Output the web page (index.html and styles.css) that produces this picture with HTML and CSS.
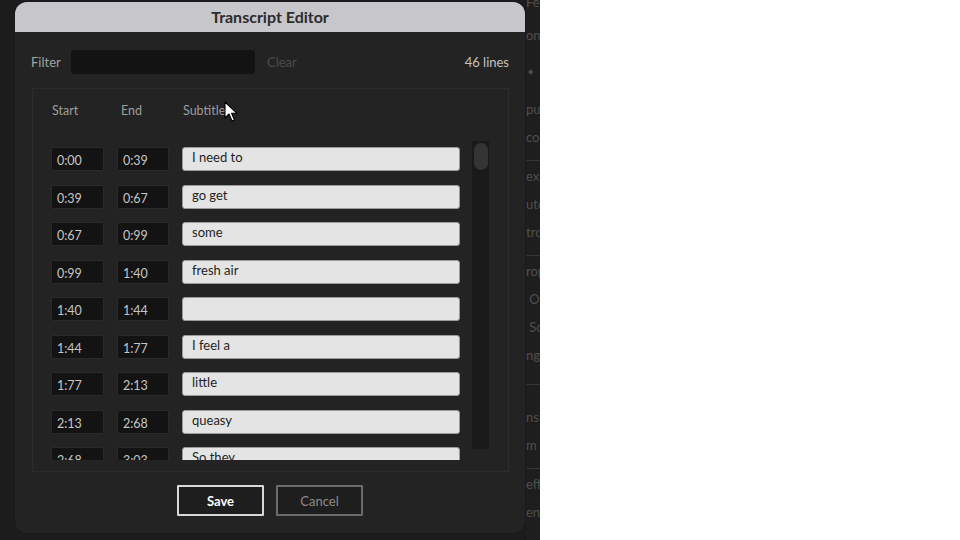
FILE: index.html
```html
<!DOCTYPE html>
<html lang="en">
<head>
    <meta charset="UTF-8">
    <title>Transcript Editor</title>
    <link rel="stylesheet" href="styles.css">
</head>
<body>
    <div class="app">
        <div class="workspace"></div>
        <aside class="side-panel">
            <div class="side-item first">Fe</div>
            <div class="side-item push-s">ons</div>
            <div class="side-item spark push-m">✦</div>
            <div class="side-item push-m">pu</div>
            <div class="side-item">con</div>
            <div class="side-sep"></div>
            <div class="side-item">ext</div>
            <div class="side-item">uto</div>
            <div class="side-item">tro</div>
            <div class="side-sep"></div>
            <div class="side-item">rop</div>
            <div class="side-item">&nbsp;O</div>
            <div class="side-item">&nbsp;Sc</div>
            <div class="side-item">ngt</div>
            <div class="side-sep wide"></div>
            <div class="side-item">nsit</div>
            <div class="side-item">m</div>
            <div class="side-sep"></div>
            <div class="side-item">effe</div>
            <div class="side-item">ent</div>
        </aside>

        <!-- modal dialog -->
        <div class="dialog">
            <div class="dialog-title">Transcript Editor</div>
            <div class="dialog-body">
                <div class="filter-row">
                    <label class="filter-label">Filter</label>
                    <div class="filter-input"></div>
                    <span class="filter-clear">Clear</span>
                    <span class="line-count">46 lines</span>
                </div>

                <div class="list-box">
                    <div class="list-head">
                        <span>Start</span>
                        <span>End</span>
                        <span>Subtitle</span>
                    </div>
                    <div class="list-scroll">
                        <div class="rows">
                            <div class="row"><div class="time">0:00</div><div class="time">0:39</div><div class="subtitle">I need to</div></div>
                            <div class="row"><div class="time">0:39</div><div class="time">0:67</div><div class="subtitle">go get</div></div>
                            <div class="row"><div class="time">0:67</div><div class="time">0:99</div><div class="subtitle">some</div></div>
                            <div class="row"><div class="time">0:99</div><div class="time">1:40</div><div class="subtitle">fresh air</div></div>
                            <div class="row"><div class="time">1:40</div><div class="time">1:44</div><div class="subtitle"></div></div>
                            <div class="row"><div class="time">1:44</div><div class="time">1:77</div><div class="subtitle">I feel a</div></div>
                            <div class="row"><div class="time">1:77</div><div class="time">2:13</div><div class="subtitle">little</div></div>
                            <div class="row"><div class="time">2:13</div><div class="time">2:68</div><div class="subtitle">queasy</div></div>
                            <div class="row"><div class="time">2:68</div><div class="time">3:03</div><div class="subtitle">So they</div></div>
                        </div>
                        <div class="scrollbar"><div class="thumb"></div></div>
                    </div>
                </div>

                <div class="buttons">
                    <button class="btn btn-save">Save</button>
                    <button class="btn btn-cancel">Cancel</button>
                </div>
            </div>
        </div>

        <svg class="cursor" width="14" height="22" viewBox="0 0 14 22">
            <path d="M1 1 L1 17 L5 13 L8 20 L10.5 19 L7.6 12.3 L13 12.3 Z" fill="#fff" stroke="#000" stroke-width="1.1" stroke-linejoin="round"/>
        </svg>
    </div>
</body>
</html>
```

FILE: styles.css
```css
body {
    margin: 0;
    background-color: #fff;
    font-family: Lato, "Noto Sans", sans-serif;
}
.app {
    position: relative;
    width: 540px;
    height: 540px;
    overflow: hidden;
    display: flex;
    background-color: #1c1c1c;
}
.workspace {
    flex: 1;
}

/* strip of the app's right panel, mostly hidden by the dialog */
.side-panel {
    width: 14px;
    background-color: #1e1e1e;
    border-left: 1px solid #191919;
    overflow: hidden;
    white-space: nowrap;
    font-size: 13px;
    color: #4f4f4f;
}
.side-item {
    height: 28px;
    line-height: 28px;
}
.side-item.first {
    margin-top: -12px;
}
.side-item.push-s {
    margin-top: 5px;
}
.side-item.push-m {
    margin-top: 9px;
}
.side-item.spark {
    font-size: 11px;
}
.side-sep {
    height: 1px;
    margin: 9px 0 1px;
    background-color: #353535;
}
.side-sep.wide {
    margin: 15px 0 18px;
}

/* dialog */
.dialog {
    position: absolute;
    left: 15px;
    top: 2px;
    width: 510px;
    height: 531px;
    display: flex;
    flex-direction: column;
    background-color: #232323;
    border-radius: 12px;
    overflow: hidden;
    box-shadow: 0 0 0 1px #1a1a1a;
}
.dialog-title {
    height: 30px;
    line-height: 29px;
    text-align: center;
    background-color: #c7c6cb;
    color: #2c2c2c;
    font-weight: bold;
    font-size: 16px;
}
.dialog-body {
    flex: 1;
    display: flex;
    flex-direction: column;
    padding: 18px 16px 0 16px;
}
.filter-row {
    display: flex;
    align-items: center;
    height: 24px;
    font-size: 13px;
}
.filter-label {
    color: #a2a2a2;
    width: 40px;
}
.filter-input {
    width: 184px;
    height: 24px;
    background-color: #131313;
    border-radius: 3px;
}
.filter-clear {
    margin-left: 12px;
    color: #4c4c4c;
}
.line-count {
    margin-left: auto;
    color: #c2c2c2;
}
.list-box {
    margin: 14px 0 0 1px;
    height: 382px;
    border: 1px solid #2c2c2c;
    padding: 0 17px 0 18px;
}
.list-head {
    display: grid;
    grid-template-columns: 53px 52px 278px;
    column-gap: 13px;
    padding: 14px 0 0 1px;
    height: 38px;
    box-sizing: border-box;
    font-size: 12.5px;
    color: #9c9c9c;
}
.list-head span:nth-child(2) {
    padding-left: 3px;
}
.list-scroll {
    display: flex;
    align-items: flex-start;
    gap: 12px;
    margin-top: 14px;
    height: 319px;
}
.rows {
    height: 319px;
    overflow: hidden;
    padding-top: 6px;
    box-sizing: border-box;
    display: flex;
    flex-direction: column;
    gap: 13.5px;
}
.row {
    display: grid;
    grid-template-columns: 53px 52px 278px;
    column-gap: 13px;
    flex-shrink: 0;
    height: 24px;
}
.time {
    background-color: #131313;
    border: 1px solid #2a2a2a;
    border-radius: 2px;
    box-sizing: border-box;
    padding: 5px 0 0 5px;
    font-size: 12.5px;
    color: #c6c6c6;
}
.subtitle {
    background-color: #e4e4e4;
    border: 1px solid #9a9a9a;
    border-radius: 3px;
    box-sizing: border-box;
    padding: 1px 0 0 9px;
    font-size: 13px;
    color: #1f1f1f;
}
.scrollbar {
    width: 17px;
    height: 308px;
    background-color: #1a1a1a;
    padding: 2px 1px 0 2px;
    box-sizing: border-box;
}
.thumb {
    height: 27px;
    background-color: #343434;
    border-radius: 7px;
}
.buttons {
    display: flex;
    justify-content: center;
    gap: 12px;
    margin-top: 13px;
}
.btn {
    width: 87px;
    height: 31px;
    background-color: #1e1e1e;
    font-family: Lato, "Noto Sans", sans-serif;
    font-size: 13px;
    border-radius: 1px;
    padding: 0;
}
.btn-save {
    border: 2px solid #d8d8d8;
    color: #fff;
    font-weight: bold;
}
.btn-cancel {
    border: 2px solid #6c6c6c;
    color: #8c8c8c;
}
.cursor {
    position: absolute;
    left: 224px;
    top: 101px;
}
```
